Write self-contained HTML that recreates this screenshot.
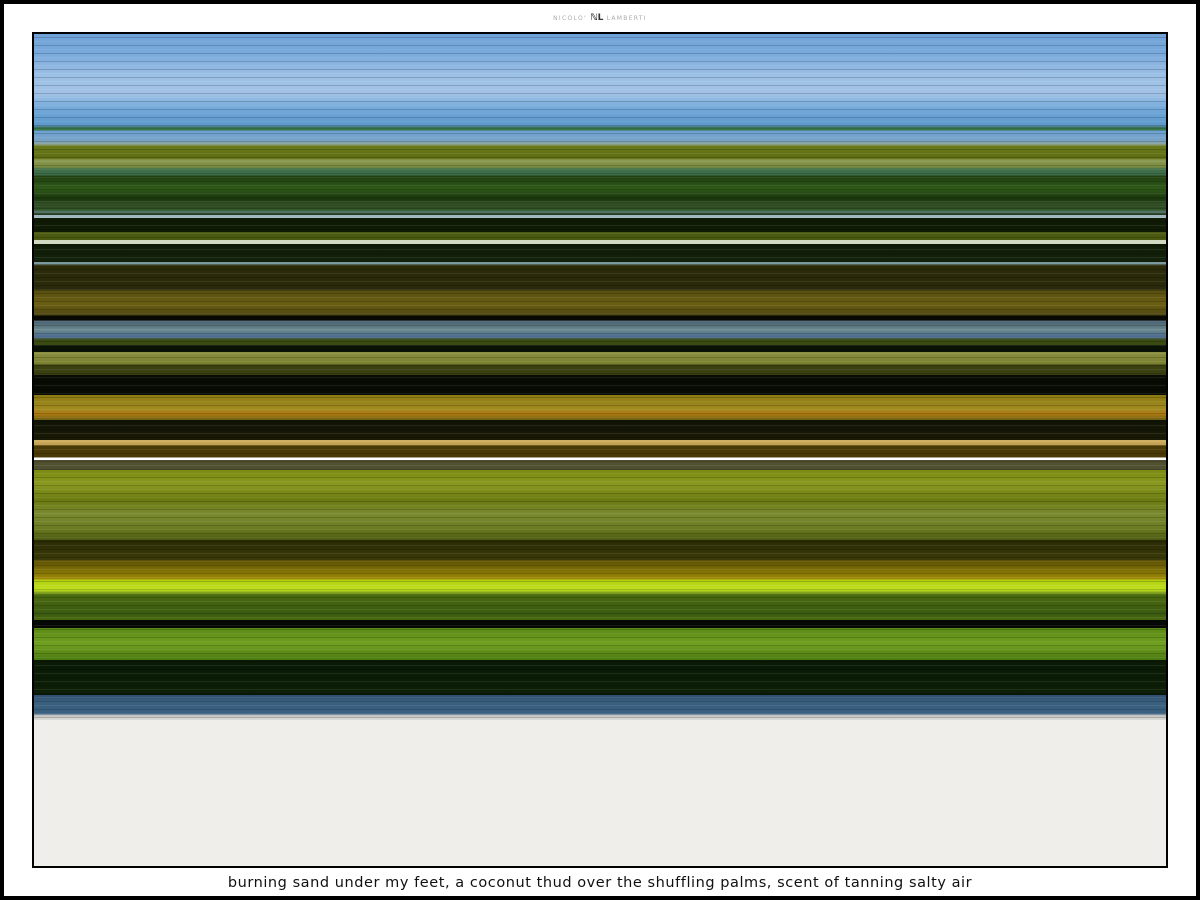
<!DOCTYPE html>
<html><head><style>
html,body{margin:0;padding:0;}
body{width:1200px;height:900px;box-sizing:border-box;border:4px solid #000;background:#fff;position:relative;overflow:hidden;font-family:"DejaVu Sans","Liberation Sans",sans-serif;}
.logo{position:absolute;top:9px;left:0;width:1192px;text-align:center;font-size:6px;letter-spacing:1.3px;color:#aaa;}
.logo b{color:#333;font-size:9px;letter-spacing:0;}
.img{position:absolute;left:28px;top:28px;width:1132px;height:832px;border:2px solid #000;
background:linear-gradient(to bottom,
#6fa3d8 0px,#7aaadc 20px,#9cc0e6 41px,#a2c3e6 60px,#7fb0de 70px,#6aa3d6 80px,#5f9acd 91px,#5b8ab0 92px,#2f6b3e 94px,#2f6b3e 96px,#6da2d3 97px,#78a3c8 106px,#8fa8a0 110px,
#6b7a1a 112px,#5f6e12 124px,#8a9a50 126px,#7a8a40 133px,#3f6f4a 135px,#3f6f4a 141px,
#1f3f10 142px,#2e5a18 155px,#1a350c 165px,#3a5a30 172px,#1f3f10 175px,#5a8070 178px,#1a3010 181px,
#9fb8c0 181px,#9fb8c0 184px,#0f1a05 184px,#0f1a05 198px,#4a5a10 198px,#4a5a10 206px,#d0d8c0 206px,#d0d8c0 210px,
#0e1a06 210px,#13220a 228px,#7a9aa0 228px,#7a9aa0 230px,#2a2a08 231px,#2a2a0a 256px,#5a5010 257px,#6a5e12 270px,#4e4610 281px,
#0a0a05 282px,#0a0a05 286px,#4a6070 287px,#6a8a90 296px,#4a6a90 303px,#3a4a10 306px,#3a4a10 311px,#0a1205 311px,#0a1205 318px,
#8a9040 318px,#7a8030 330px,#3a4010 331px,#3a4010 341px,#070b03 341px,#070b03 361px,
#8a7a10 361px,#a08a20 375px,#b07a10 380px,#6a6010 386px,#0f1205 386px,#1a1a05 406px,
#d0b060 406px,#c0a050 411px,#4a3a05 412px,#4a3a05 423px,#ffffff 424px,#ffffff 426px,#505030 426px,#505030 436px,
#7a8a10 436px,#8a9a20 450px,#6a7a10 466px,#7a8a30 480px,#6a7a20 495px,#4a5a10 506px,
#2a2a05 506px,#3a3a08 526px,#5a5005 526px,#8a7a05 540px,#a08a05 545px,
#b0d010 546px,#c0e020 556px,#4a6a10 561px,#3a5a10 580px,#4a6a10 586px,
#050805 586px,#050805 594px,#5a8a15 594px,#70a020 610px,#4a7a10 626px,
#0a1a05 626px,#0c1e06 660px,#050a03 661px,
#305070 661px,#3a6080 668px,#3a6080 680px,#c0c0c0 681px,#dcdcd6 686px,
#efeeea 686px,#efeeea 832px);}
.lines{position:absolute;left:0;top:0;width:100%;height:686px;background:repeating-linear-gradient(to bottom,rgba(0,0,0,0) 0px,rgba(0,0,0,0) 3px,rgba(0,0,0,0.18) 3px,rgba(0,0,0,0.18) 4px,rgba(0,0,0,0) 4px,rgba(0,0,0,0) 7px,rgba(255,255,255,0.08) 7px,rgba(255,255,255,0.08) 8px);}
.cap{position:absolute;left:0;width:1192px;top:871px;text-align:center;font-size:14.5px;letter-spacing:0.55px;color:#111;font-family:"DejaVu Sans","Liberation Sans",sans-serif;}
</style></head><body>
<div class="logo">NICOLO' <b>ℕL</b> LAMBERTI</div>
<div class="img"><div class="lines"></div></div>
<div class="cap">burning sand under my feet, a coconut thud over the shuffling palms, scent of tanning salty air</div>
</body></html>
